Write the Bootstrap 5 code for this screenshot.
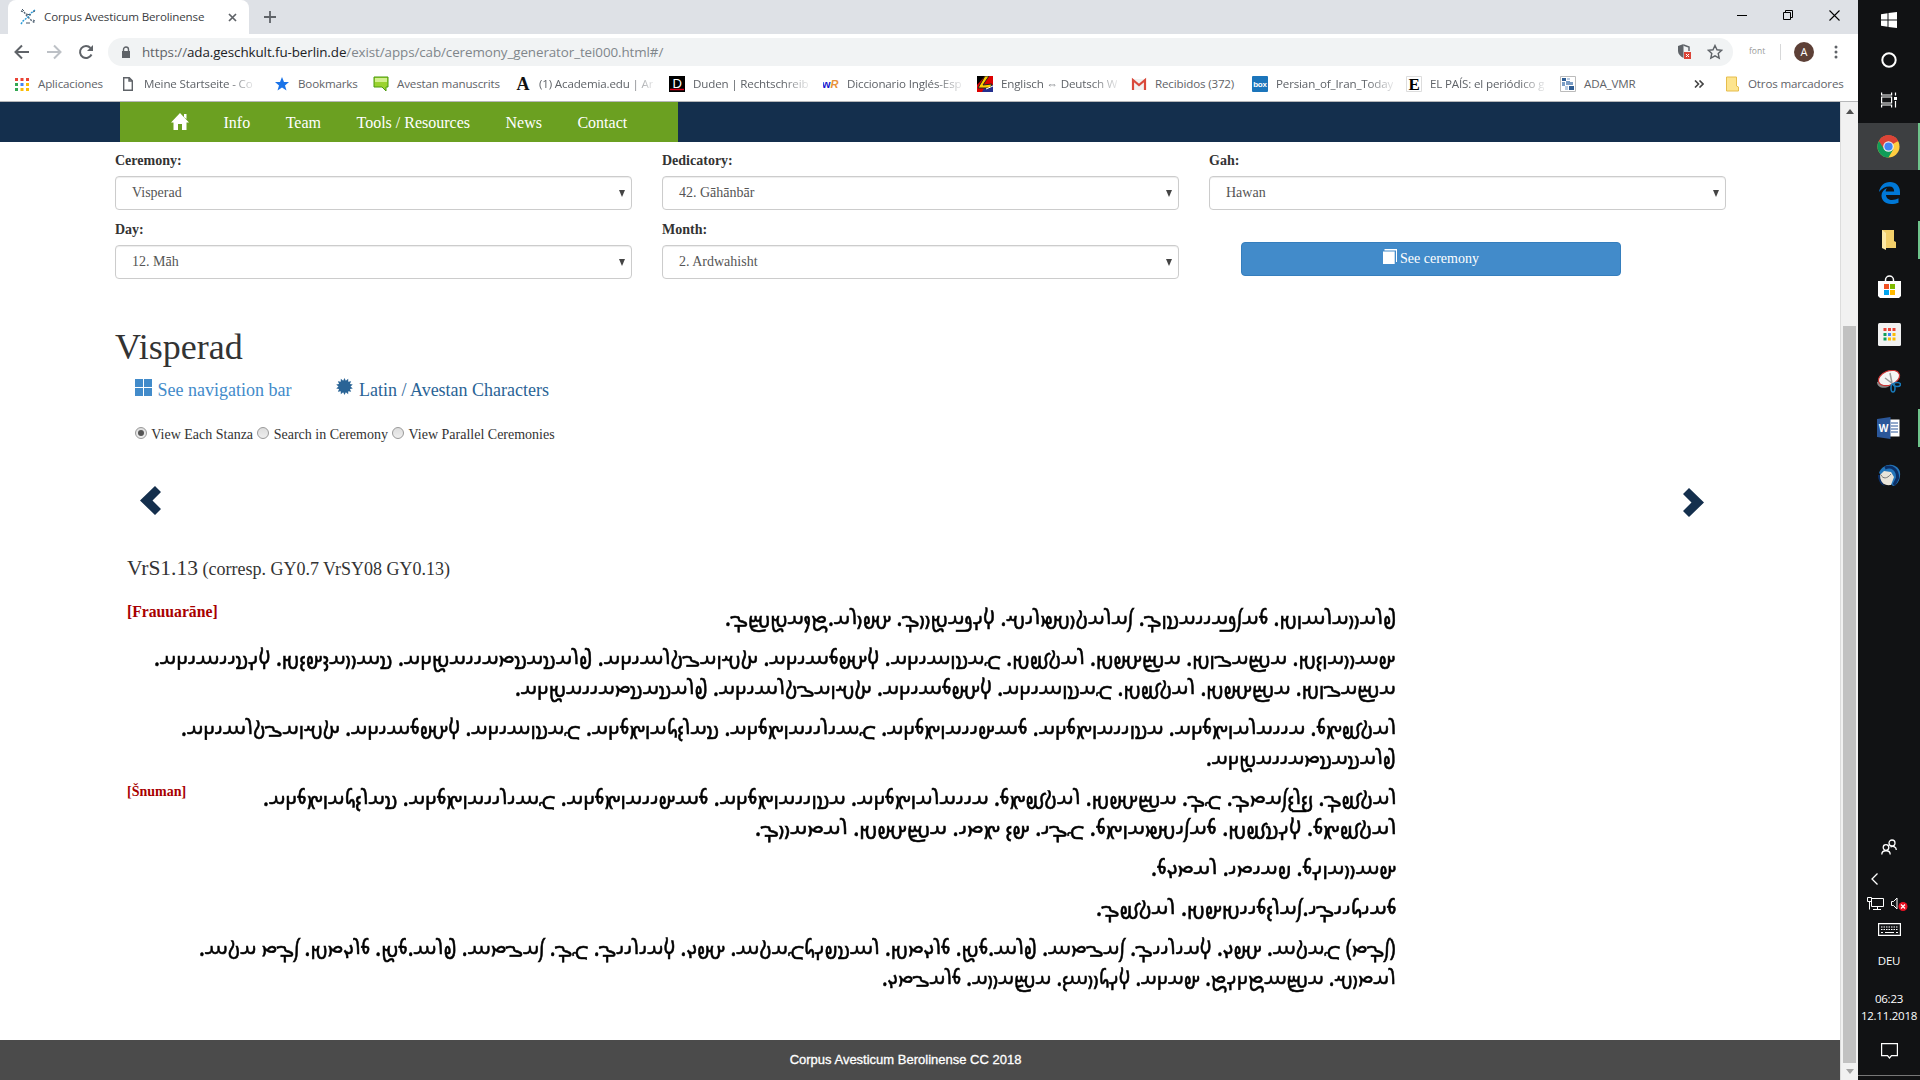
<!DOCTYPE html>
<html lang="es">
<head>
<meta charset="utf-8">
<title>Corpus Avesticum Berolinense</title>
<link href="https://cdn.jsdelivr.net/npm/bootstrap@5.3.0/dist/css/bootstrap.min.css" rel="stylesheet">
<style>
html,body{height:100%;overflow:hidden}
body{background:#fff;font-family:"Liberation Serif",serif;font-size:14px;line-height:20px;color:#333}
svg{display:block;flex:none}
.screen{width:1920px;height:1080px}
.browser{width:1858px;height:1080px}
.ui{font-family:"Open Sans","Noto Sans",sans-serif;font-size:11.6px;letter-spacing:-.16px;color:#5f6368}
.tabstrip{height:34px;background:#dee1e6;padding-left:8px}
.tab1{width:241px;height:34px;background:#fff;border-radius:8px 8px 0 0;padding:0 12px 0 12px;color:#3c4043}
.wincontrols{gap:36px;margin-left:auto;padding-right:18px}
.toolbar{height:36px;padding:0 20px 0 14px}
.omni{height:28px;width:1625px;border-radius:14px;background:#f1f3f4;margin-left:14px;padding:0 10px 0 13px;font-size:13.4px;letter-spacing:-.09px;color:#80868b}
.omni b{font-weight:400;color:#202124}
.omni i{font-style:normal;color:#5f6368}
.bookbar{height:32px;border-bottom:1px solid #b6b7b9;padding:0 15px 4px 14px;white-space:nowrap}
.bookgrid{display:grid;grid-template-columns:106px 154px 99px 142px 154px 154px 154px 154px 121px 154px 154px 132px}
.bm{display:flex;align-items:center;gap:8px;white-space:nowrap}
.bm>svg{width:16px;height:16px}
.bm.fade-r span{-webkit-mask-image:linear-gradient(90deg,#000 78%,rgba(0,0,0,.15))}
.viewport{height:978px}
.sitepage{width:1840px}
.sitenav{height:40px;background:#142f4d;padding-left:120px}
.menu-green{width:558px;height:40px;background:#6ba021;color:#fff;font-size:16px;gap:35.500px;padding:2px 0 0 51px}
.criteria{display:grid;grid-template-columns:517px 517px 517px;column-gap:30px;row-gap:10px;padding:9px 0 0 115px}
.criteria label{font-weight:700;display:block;height:20px;margin-bottom:5px;color:#333}
.sel{height:34px;border:1px solid #ccc;border-radius:4px;box-shadow:inset 0 1px 1px rgba(0,0,0,.075);color:#555;padding:0 6px 0 16px;font-size:14px}
.seebtn{width:380px;height:34px;margin:22px 0 0 32px;border-radius:4px;background:#428bca;border:1px solid #357ebd;color:#fff;font-size:14px;padding:0 0 2px}
.title-main{font-size:36px;line-height:40px;font-weight:400;margin:48px 0 0 115px;color:#333}
.tools{font-size:18px;line-height:26px;margin:10px 0 0 135px;height:26px}
.c1{color:#428bca}.c2{color:#2a6496}
.radios{margin:22px 0 0 135px;height:20px;gap:4.300px}
.rad{width:12px;height:12px;border:1px solid #999;border-radius:50%;background:linear-gradient(#ddd,#eee);margin-bottom:5px;display:flex;align-items:center;justify-content:center}
.rad.on::after{content:"";width:6px;height:6px;border-radius:50%;background:#555}
.arrows{margin:40px 136px 0 140px;height:32px}
.stanza-h{margin:37px 0 0 127px;height:28px;line-height:28px;font-size:18px}
.stanza-h .big{font-size:21.5px}
.stanzas{width:1269px;margin:20px 0 0 127px}
.sect{font-weight:700;color:#a80000;white-space:nowrap;width:0}
.ave{min-width:0;font-family:"Noto Sans Avestan","Noto Sans",sans-serif;direction:rtl;color:#000;font-size:24px;line-height:30px;-webkit-text-stroke:.6px #000}
.ave [data-w]{height:30px;white-space:nowrap}
.ave span{display:inline-block;transform-origin:100% 50%}
.para{margin:0 0 10px}
.foot{height:40px;background:#4b4b4b;color:#fff;font:13px/40px "Liberation Sans",sans-serif;-webkit-text-stroke:.3px #fff;text-align:center;padding-right:29px;margin-top:auto}
.sbar{width:18px;background:#f1f1f1;border-left:1px solid #dcdcdc}
.thumb{width:13px;height:737px;background:#c1c1c1;margin-left:2px}
.taskbar{width:62px;background:#111214;color:#fff;font-family:"Open Sans",sans-serif;font-size:12px}
.tk{height:40px;width:62px}
.tk2{height:47px;width:62px;padding-bottom:1px}
.hot{background:#3d3f41;border-right:2px solid #6fc38b}
.run{height:38px;border-right:2px solid #6fc38b}
.tray{margin-top:auto;font-size:11.5px;letter-spacing:-.25px}
</style>
<script src="https://cdn.jsdelivr.net/npm/bootstrap@5.3.0/dist/js/bootstrap.bundle.min.js"></script>
</head>
<body>
<div class="screen d-flex">
<div class="browser d-flex flex-column">
  <div class="ui tabstrip d-flex align-items-center">
    <div class="tab1 d-flex align-items-center">
      <svg width="17" height="18" viewBox="0 0 17 18" fill="none"><path d="M1 3l3 1 3 4 4 4 4 3" stroke="#567" stroke-width="1.5" stroke-dasharray="2 1.2"/><path d="M15 2l-4 3-3 4-5 4-2 3" stroke="#2b9bd8" stroke-width="1.5" stroke-dasharray="2 1"/><path d="M2 1l2 2M13 4l2-1M6 15h4M13 12l2 1M6 6l5 1" stroke="#456"/></svg>
      <span style="margin-left:7px">Corpus Avesticum Berolinense</span>
      <svg class="ms-auto" width="9" height="9" viewBox="0 0 9 9"><path d="M1 1l7 7M8 1L1 8" stroke="#5f6368" stroke-width="1.7"/></svg>
    </div>
    <svg style="margin-left:15px" width="12" height="12" viewBox="0 0 12 12"><path d="M6 0v12M0 6h12" stroke="#5f6368" stroke-width="1.8"/></svg>
    <div class="wincontrols d-flex align-items-center mb-2 mt-1">
      <svg width="10" height="10" viewBox="0 0 10 10"><path d="M0 5.5h10" stroke="#000"/></svg>
      <svg width="10" height="10" viewBox="0 0 10 10" fill="none" stroke="#000"><path d="M.5 2.5h7v7h-7zM2.5 2.500V.5h7v7h-2"/></svg>
      <svg width="11" height="11" viewBox="0 0 11 11"><path d="M.5.5l10 10M10.500.5l-10 10" stroke="#000" stroke-width="1.1"/></svg>
    </div>
  </div>
  <div class="ui toolbar d-flex align-items-center">
    <svg width="16" height="16" viewBox="0 0 16 16" fill="none" stroke="#5f6368" stroke-width="2"><path d="M15 8H2M8 1.500L1.500 8 8 14.500"/></svg>
    <svg style="margin-left:16px" width="16" height="16" viewBox="0 0 16 16" fill="none" stroke="#bdc1c6" stroke-width="2"><path d="M1 8h13M8 1.500L14.500 8 8 14.500"/></svg>
    <svg style="margin-left:16px" width="16" height="16" viewBox="0 0 16 16" fill="none"><path d="M13.500 10.500A6 6 0 1 1 12.500 4" stroke="#5f6368" stroke-width="2"/><path d="M15 1v6H9z" fill="#5f6368"/></svg>
    <div class="omni d-flex align-items-center">
      <svg width="10" height="13" viewBox="0 0 10 13"><path d="M1 5h8v7H1z" fill="#5f6368"/><path d="M2.500 5V3.500a2.500 2.500 0 0 1 5 0V5" fill="none" stroke="#5f6368" stroke-width="1.400"/></svg>
      <span style="margin-left:11px"><i>https://</i><b>ada.geschkult.fu-berlin.de</b>/exist/apps/cab/ceremony_generator_tei000.html#/</span>
      <svg class="ms-auto" width="15" height="16" viewBox="0 0 15 16"><path d="M6.500 0L1 2v5c0 3 2.500 5.500 5.500 7z" fill="#5f6368"/><path d="M6.500 1L12 3v4" fill="none" stroke="#5f6368" stroke-width="1.500"/><path d="M7 8h7v7H7z" fill="#db4437"/><path d="M9 10l3 3M12 10l-3 3" stroke="#fff"/></svg>
      <svg style="margin-left:15px" width="16" height="16" viewBox="0 0 16 16"><path d="M8 1.500l2 4.300 4.700.5-3.500 3.200 1 4.700L8 11.800l-4.200 2.400 1-4.700L1.300 6.300 6 5.800z" fill="none" stroke="#5f6368" stroke-width="1.400"/></svg>
    </div>
    <span style="font-size:8.500px;margin:-2px 0 0 16px;color:#999;letter-spacing:0">font</span>
    <span class="vr" style="height:16px;margin:0 13px 0 15px;align-self:center"></span>
    <svg width="20" height="20" viewBox="0 0 20 20"><circle cx="10" cy="10" r="10" fill="#5d4037"/><text x="10" y="14" font-size="11" fill="#fff" text-anchor="middle">A</text></svg>
    <svg class="ms-auto" width="4" height="14" viewBox="0 0 4 14" fill="#5f6368"><circle cx="2" cy="2" r="1.500"/><circle cx="2" cy="7" r="1.500"/><circle cx="2" cy="12" r="1.500"/></svg>
  </div>
  <div class="ui bookbar d-flex align-items-center">
    <div class="bookgrid">
      <div class="bm"><svg viewBox="0 0 16 16"><path d="M1 2h3v3H1zM6.500 2h3v3h-3zM12 2h3v3h-3z" fill="#ea4335"/><path d="M1 7h3v3H1zM1 12h3v3H1z" fill="#34a853"/><path d="M6.500 7h3v3h-3z" fill="#4285f4"/><path d="M12 7h3v3h-3zM6.500 12h3v3h-3zM12 12h3v3h-3z" fill="#fbbc05"/></svg><span>Aplicaciones</span></div>
      <div class="bm fade-r"><svg viewBox="0 0 16 16"><path d="M3.700 1.700h5.600l3 3v9.600H3.700zM9 2v3h3" fill="none" stroke="#5f6368" stroke-width="1.400"/></svg><span>Meine Startseite - Co</span></div>
      <div class="bm"><svg viewBox="0 0 16 16"><path d="M8 1l2 5h5l-4 3.500 1.500 5L8 11.500l-4.500 3L5 9.500 1 6h5z" fill="#1a73e8"/></svg><span>Bookmarks</span></div>
      <div class="bm"><svg viewBox="0 0 16 16"><path d="M1 1h14v10h-2v4l-4-4H1z" fill="#9bd32f" stroke="#4b9a0d"/><path d="M2 2h12v4H2z" fill="#d3f08f"/></svg><span>Avestan manuscrits</span></div>
      <div class="bm fade-r"><svg viewBox="0 0 16 16"><text x="8" y="14" font-family="Liberation Serif" font-weight="700" font-size="18" text-anchor="middle" fill="#111">A</text></svg><span>(1) Academia.edu | Ar</span></div>
      <div class="bm fade-r"><svg viewBox="0 0 16 16"><path d="M0 0h16v16H0z"/><path d="M1 13.500h14" stroke="#e2001a" stroke-width="1.500"/><text x="8" y="11.500" font-family="Liberation Sans" font-size="13" text-anchor="middle" fill="#fff">D</text></svg><span>Duden | Rechtschreib</span></div>
      <div class="bm fade-r"><svg viewBox="0 0 16 16" font-family="Liberation Sans" font-weight="700" font-size="11"><text x="-1" y="12" fill="#1a1ad0">w</text><text x="7.500" y="12" fill="#e8923a" font-style="italic">R</text></svg><span>Diccionario Inglés-Esp</span></div>
      <div class="bm fade-r"><svg viewBox="0 0 16 16"><path d="M0 0h16v16H0z" fill="#d00"/><path d="M0 0h8L0 9z"/><path d="M9 9h7v7H5z" fill="#25308f"/><path d="M8 0h4L6 9l9-1-2 4H1z" fill="#fc0" stroke="#222"/><path d="M9 13l7-3" stroke="#fff"/></svg><span>Englisch ⇔ Deutsch W</span></div>
      <div class="bm"><svg viewBox="0 0 16 16"><path d="M1 3h14v11H1z" fill="#f2f2f2"/><path d="M2 14V4l6 5 6-5v10" fill="none" stroke="#d9493b" stroke-width="2.200"/></svg><span>Recibidos (372)</span></div>
      <div class="bm fade-r"><svg viewBox="0 0 16 16"><rect width="16" height="16" rx="1" fill="#1b75bb"/><text x="8" y="11" font-family="Liberation Sans" font-weight="700" font-size="8" text-anchor="middle" fill="#fff">box</text></svg><span>Persian_of_Iran_Today</span></div>
      <div class="bm fade-r"><svg viewBox="0 0 16 16"><path d="M.5.5h15v15H.5z" fill="#fff" stroke="#ddd"/><text x="8" y="14" font-family="Liberation Serif" font-weight="700" font-size="17" text-anchor="middle">E</text></svg><span>EL PAÍS: el periódico g</span></div>
      <div class="bm"><svg viewBox="0 0 16 16"><path d="M.5.5h15v15H.5z" fill="#fff" stroke="#bbb"/><path d="M2 2h4v3H2zM9 10h5v4H9z" fill="#2f5d93"/><path d="M6 5h4v4H6zM2 6h3v4H2zM10 6h3v3h-3z" fill="#7a9cc4"/><path d="M7 2h3v2H7zM5 10h3v4H5z" fill="#b9cce2"/></svg><span>ADA_VMR</span></div>
    </div>
    <svg style="margin-left:2px" width="10" height="8" viewBox="0 0 10 8"><path d="M1 .5L4.500 4 1 7.500M5.500.5L9 4 5.500 7.500" fill="none" stroke="#444" stroke-width="1.600"/></svg>
    <span class="vr" style="height:16px;margin:0 12px 0 10px;align-self:center"></span>
    <svg width="13" height="16" viewBox="0 0 13 16"><path d="M.5 1h10v9l2 1v4H.5z" fill="#fde48e" stroke="#e6bd4c"/></svg>
    <span style="margin-left:9px">Otros marcadores</span>
  </div>

  <div class="viewport d-flex">
    <div class="sitepage d-flex flex-column">
      <nav class="sitenav">
        <div class="menu-green d-flex align-items-center">
          <svg class="mb-1" width="18" height="17" viewBox="0 0 18 17" fill="#fff"><path d="M9 0l9 9.500h-2.500V17H11v-6H7v6H2.500V9.500H0zM13 1h2.500v5L13 4z"/></svg>
          <span style="margin-left:-1px">Info</span><span>Team</span><span>Tools / Resources</span><span>News</span><span>Contact</span>
        </div>
      </nav>
      <form class="criteria">
        <div><label>Ceremony:</label><div class="sel d-flex align-items-center justify-content-between">Visperad<svg width="6" height="7" viewBox="0 0 6 7"><path d="M0 0h6L3 7z" fill="#444"/></svg></div></div>
        <div><label>Dedicatory:</label><div class="sel d-flex align-items-center justify-content-between">42. Gāhānbār<svg width="6" height="7" viewBox="0 0 6 7"><path d="M0 0h6L3 7z" fill="#444"/></svg></div></div>
        <div><label>Gah:</label><div class="sel d-flex align-items-center justify-content-between">Hawan<svg width="6" height="7" viewBox="0 0 6 7"><path d="M0 0h6L3 7z" fill="#444"/></svg></div></div>
        <div><label>Day:</label><div class="sel d-flex align-items-center justify-content-between">12. Māh<svg width="6" height="7" viewBox="0 0 6 7"><path d="M0 0h6L3 7z" fill="#444"/></svg></div></div>
        <div><label>Month:</label><div class="sel d-flex align-items-center justify-content-between">2. Ardwahisht<svg width="6" height="7" viewBox="0 0 6 7"><path d="M0 0h6L3 7z" fill="#444"/></svg></div></div>
        <div><button type="button" class="btn seebtn d-flex align-items-center justify-content-center"><svg class="mb-1" style="margin-right:3px" width="14" height="15" viewBox="0 0 14 15"><path d="M1.500 0H14v13h-1V1.500H1.500z" fill="#fff"/><path d="M0 2.500h11.700V15H0z" fill="#fff"/></svg>See ceremony</button></div>
      </form>
      <h1 class="title-main">Visperad</h1>
      <div class="tools d-flex">
        <span class="c1 d-flex"><svg style="margin:2px 5.500px 0 0" width="17" height="17" viewBox="0 0 17 17" fill="#428bca"><path d="M0 0h8v8H0zM9 0h8v8H9zM0 9h8v8H0zM9 9h8v8H9z"/></svg>See navigation bar</span>
        <span class="c2 d-flex" style="margin-left:45px"><svg id="burst" style="margin:1px 5.500px 0 0" width="17" height="17" viewBox="0 0 17 17"><path fill="#2a6496"/></svg>Latin / Avestan Characters</span>
      </div>
      <div class="radios d-flex align-items-center">
        <span class="rad on"></span><span>View Each Stanza</span><span class="rad"></span><span>Search in Ceremony</span><span class="rad"></span><span>View Parallel Ceremonies</span>
      </div>
      <div class="arrows d-flex justify-content-between">
        <svg width="21" height="31" viewBox="0 0 21 31"><path d="M15 1l6 6-8.500 8.500L21 24l-6 6L0 15.500z" fill="#142f4d"/></svg>
        <svg style="margin-top:3px" width="21" height="31" viewBox="0 0 21 31"><path d="M6 0L0 6l8.500 8.500L0 23l6 6 15-14.500z" fill="#142f4d"/></svg>
      </div>
      <div class="stanza-h"><span class="big">VrS1.13</span> (corresp. GY0.7 VrSY08 GY0.13)</div>
      <div class="stanzas">
        <div class="d-flex"><div class="sect" style="font-size:15.700px">[Frauuarāne]</div>
          <div class="ave flex-fill">
            <div class="para"><div data-w="671">frauuarāne. mazdaiiasnō. zaraϑuštriš. vīdaēuuō. ahura.ṱkaēṣō.</div></div>
            <div class="para"><div data-w="1242">hāuuanəe. aṣaone. aṣahe. raϑβe. yasnāica. vahmāica. xšnaoϑrāica. frasastaiiaēca. sāuuaŋhəe. vīsiiāica.</div>
            <div data-w="881">aṣaone. aṣahe. raϑβe. yasnāica. vahmāica. xšnaoϑrāica. frasastaiiaēca.</div></div>
            <div class="para"><div data-w="1215">raϑβąm. aiiaranąmca. asniianąmca. māhiianąmca. yāiriianąmca. sarəδanąmca. yasnāica. vahmāica. xšnaoϑrāica.</div>
            <div data-w="190">frasastaiiaēca.</div></div>
          </div>
        </div>
        <div class="d-flex"><div class="sect">[Šnuman]</div>
          <div class="ave flex-fill">
            <div class="para"><div data-w="1133">raϑβō. bərəzatō. yō. aṣahe. raϑβąm. aiiaranąmca. asniianąmca. māhiianąmca. yāiriianąmca. sarəδanąmca.</div>
            <div data-w="641">raϑβąm. vīsβe. mazištanąm. yōi. hə ąti. aṣahe. ratauuō.</div></div>
            <div class="para"><div data-w="245">hāuuanīm. paiti. ratūm.</div></div>
            <div class="para"><div data-w="300">maiδiiōi.zarəmiiehe. raϑβō.</div></div>
            <div class="para"><div data-w="1197">(zōt) yaϑā. ahū. vairiiō. zaotā. frā.mē. mrūte. rāspīδyaϑā. ahū. vairiiō. yō. zaotā. frā.mē. mrūte. zōt aϑā.</div>
            <div data-w="514">ratuš. aṣāṱcīṱ. haca. vīδuuå. aṣauua. mraotū.</div></div>
          </div>
        </div>
      </div>
      <footer class="foot">Corpus Avesticum Berolinense CC 2018</footer>
    </div>
    <div class="sbar d-flex flex-column">
      <svg style="margin:7px 0 0 5px" width="8" height="5" viewBox="0 0 8 5"><path d="M0 5h8L4 0z" fill="#505050"/></svg>
      <div class="thumb mt-auto"></div>
      <svg style="margin:6px 0 6px 5px" width="8" height="5" viewBox="0 0 8 5"><path d="M0 0h8L4 5z" fill="#a3a3a3"/></svg>
    </div>
  </div>
</div>

<div class="taskbar d-flex flex-column align-items-center">
  <div class="tk d-flex align-items-center justify-content-center"><svg width="16" height="16" viewBox="0 0 16 16" fill="#fff"><path d="M0 2.200L6.500 1.300v6.200H0zM7.500 1.100L16 0v7.500H7.500zM0 8.500h6.500v6.200L0 13.800zM7.500 8.500H16V16l-8.500-1.100z"/></svg></div>
  <div class="tk d-flex align-items-center justify-content-center"><svg width="16" height="16" viewBox="0 0 16 16"><circle cx="8" cy="8" r="6.700" fill="none" stroke="#fff" stroke-width="2"/></svg></div>
  <div class="tk d-flex align-items-center justify-content-center"><svg width="16" height="16" viewBox="0 0 16 16" fill="none" stroke="#fff" stroke-width="1.200"><path d="M.6.500v2.500h10V.5M.6 5h10v6H.6zM.6 15.500V13h10v2.500M14.500.5v3M14.500 9v6.500"/><path d="M13 5h3v3h-3z" fill="#fff" stroke="none"/></svg></div>
  <div class="tk2 hot d-flex align-items-center justify-content-center" style="margin-top:3px"><svg width="23" height="23" viewBox="0 0 24 24"><circle cx="12" cy="12" r="11.500" fill="#ffcd40"/><path d="M12 12L2 6.200A11.500 11.500 0 0 1 22 6.200z" fill="#db4437"/><path d="M2 6.200A11.500 11.500 0 0 0 12 23.500l5-8.600-5-2.900z" fill="#0f9d58"/><path d="M12 6.500h10.200A11.500 11.500 0 0 0 2 6.200L7 14z" fill="#db4437"/><circle cx="12" cy="12" r="5.500" fill="#f1f1f1"/><circle cx="12" cy="12" r="4.300" fill="#4285f4"/></svg></div>
  <div class="tk2 d-flex align-items-center justify-content-center"><svg width="21" height="22" viewBox="0 0 21 22"><path d="M0 10C1 4 5 0 11 0c6 0 10 4 10 10v3H7c0 3 3 5 6 5 2.500 0 4.500-.5 6.500-1.700v4.400C17.500 21.500 15 22 12 22 6 22 2.500 18 2.500 13.500 2.500 10 5 7.500 8 6 7 7.500 6.800 8.500 6.700 9.500h8.500C15 6 13.500 4.500 10.500 4.500 6 4.500 2.500 6.500 0 10z" fill="#0078d7"/></svg></div>
  <div class="tk2 d-flex align-items-center"><div class="run d-flex w-100 align-items-center justify-content-center"><svg width="15" height="20" viewBox="0 0 15 20"><path d="M1 0h12v11l2 1v6H1z" fill="#f3cf6a"/><path d="M1 0l4 3v17l-4-2z" fill="#fde9a6"/></svg></div></div>
  <div class="tk2 d-flex align-items-center justify-content-center"><svg width="23" height="24" viewBox="0 0 23 24"><path d="M7.500 8V5a4 4 0 0 1 8 0v3" fill="none" stroke="#fff" stroke-width="1.500"/><path d="M0 6h23v15l-2 2H2l-2-2z" fill="#fff"/><path d="M6 9h5v5H6z" fill="#f25022"/><path d="M12 9h5v5h-5z" fill="#7fba00"/><path d="M6 15h5v5H6z" fill="#00a4ef"/><path d="M12 15h5v5h-5z" fill="#ffb900"/></svg></div>
  <div class="tk2 d-flex align-items-center justify-content-center"><svg width="23" height="23" viewBox="0 0 23 23"><rect width="23" height="23" rx="1.500" fill="#f1f1f1"/><path d="M5.500 5h3v3h-3zM10 5h3v3h-3zM14.500 5h3v3h-3z" fill="#ea4335"/><path d="M5.500 10h3v3h-3zM5.500 14.500h3v3h-3z" fill="#0f9d58"/><path d="M10 10h3v3h-3z" fill="#4285f4"/><path d="M14.500 10h3v3h-3zM10 14.500h3v3h-3zM14.500 14.500h3v3h-3z" fill="#fbbc05"/></svg></div>
  <div class="tk2 d-flex align-items-center justify-content-center"><svg width="24" height="23" viewBox="0 0 24 23"><path d="M0 12c0 6 8 8 14 3L10 9z" fill="#888"/><ellipse cx="12" cy="8" rx="11" ry="7" transform="rotate(-22 12 8)" fill="#f5f5f5" stroke="#c33" stroke-width="1.200"/><path d="M13 3l2 10M8 8l8 6" stroke="#999" stroke-width="1.500"/><ellipse cx="16" cy="18" rx="2" ry="4" fill="none" stroke="#1979b8" stroke-width="1.600"/><ellipse cx="20" cy="14.500" rx="3.500" ry="2" fill="none" stroke="#1979b8" stroke-width="1.600"/></svg></div>
  <div class="tk2 d-flex align-items-center"><div class="run d-flex w-100 align-items-center justify-content-center"><svg width="23" height="22" viewBox="0 0 23 22"><path d="M12 2.500h10.500v17H12z" fill="#fff"/><path d="M14 6h7M14 9h7M14 12h7M14 15h7" stroke="#2b579a"/><path d="M0 2l13.500-2v22L0 20z" fill="#2b579a"/><text x="6.700" y="15" font-size="10" font-weight="700" text-anchor="middle" fill="#fff">W</text></svg></div></div>
  <div class="tk2 d-flex align-items-center justify-content-center"><svg width="24" height="23" viewBox="0 0 24 23"><path d="M2 9C4 3 10 0 15 1c6 1 9 6 8 11-.5 5-3 9-7 10z" fill="#2476bb"/><path d="M8 4c7-3 13 2 12.500 10L17 21" stroke="#0c2f66" stroke-width="3" fill="none"/><path d="M2 12l5-5 7 1 3 5-3 8C7 22 3 18 2 12z" fill="#e9e4da"/><path d="M4 11c2 4 6 4 10-1" stroke="#777" fill="none"/><path d="M1 11c0 6 3 10 7 11-3-3-5-6-5-11z" fill="#0c2f66"/></svg></div>
  <div class="tray d-flex flex-column align-items-center w-100">
    <svg width="16" height="16" viewBox="0 0 16 16" fill="none" stroke="#fff" stroke-width="1.300"><circle cx="11" cy="4" r="3"/><circle cx="5" cy="8.500" r="2.800"/><path d="M.8 15.500c0-5 8.400-5 8.400 0M9.500 8c3-1.500 5.800 0 5.800 3"/></svg>
    <svg style="margin:18px 29px 0 0" width="7" height="12" viewBox="0 0 7 12"><path d="M6.500.5L1 6l5.500 5.500" fill="none" stroke="#fff" stroke-width="1.300"/></svg>
    <div class="d-flex" style="margin:12px 4px 0 0;gap:7px"><svg width="17" height="14" viewBox="0 0 17 14" fill="none" stroke="#fff"><path d="M4.500 1.500h12v8h-12zM10.500 9.500v3M6 12.500h8M.5.500h4v4h-4zM2.500 4.500v8"/></svg><svg width="17" height="14" viewBox="0 0 17 14"><path d="M.5 4.500h2L6 1v11L2.500 8.500h-2z" fill="none" stroke="#fff"/><circle cx="12" cy="9.500" r="4.500" fill="#e81123"/><path d="M10 7.500l4 4M14 7.500l-4 4" stroke="#fff" stroke-width="1.200"/></svg></div>
    <svg style="margin-top:12px" width="23" height="13" viewBox="0 0 23 13" fill="none" stroke="#fff"><path d="M.6.600h21.800v11.800H.6z" stroke-width="1.200"/><path d="M3 4h17M3 6.500h17" stroke-dasharray="1.500 1"/><path d="M3 9.500h2M7 9.500h9M18 9.500h2"/></svg>
    <div style="margin-top:15px">DEU</div>
    <div style="margin-top:19px;line-height:17px" class="text-center">06:23<br>12.11.2018</div>
    <svg style="margin:19px 0 9px" width="17" height="17" viewBox="0 0 17 17"><path d="M.6.600h15.800v12H10.500l-2 2.400-2-2.400H.6z" fill="none" stroke="#fff" stroke-width="1.200"/></svg>
    <div class="w-100" style="height:1px;background:#777;margin:6px 0 4px"></div>
  </div>
</div>
</div>
<script>
// Latin transliteration -> Avestan script (U+10B00 block)
const map={'a':0,'ā':1,'å':3,'ą':4,'ə':6,'e':8,'ē':9,'o':10,'ō':11,'i':12,'ī':13,'u':14,'ū':15,'k':16,'x':17,'c':23,'t':25,'ϑ':26,'d':27,'δ':28,'ṱ':29,'p':30,'f':31,'b':32,'β':33,'ŋ':34,'n':37,'m':40,'y':42,'v':44,'r':45,'s':47,'z':48,'š':49,'ṣ':52,'h':53};
document.querySelectorAll('.ave [data-w]').forEach(d=>{
  const s=document.createElement('span');
  s.textContent=[...d.textContent.trim()].map(c=>c in map?String.fromCodePoint(0x10B00+map[c]):c).join('');
  d.replaceChildren(s);
  s.style.transform='scaleX('+(d.dataset.w/s.offsetWidth)+')';
});
// fourteen-pointed burst
let p='';for(let i=0;i<28;i++){const r=i%2?6:8.5,a=i*Math.PI/14;p+=(i?'L':'M')+(8.5+r*Math.sin(a)).toFixed(2)+' '+(8.5-r*Math.cos(a)).toFixed(2)}
document.querySelector('#burst path').setAttribute('d',p+'z');
</script>
</body>
</html>
